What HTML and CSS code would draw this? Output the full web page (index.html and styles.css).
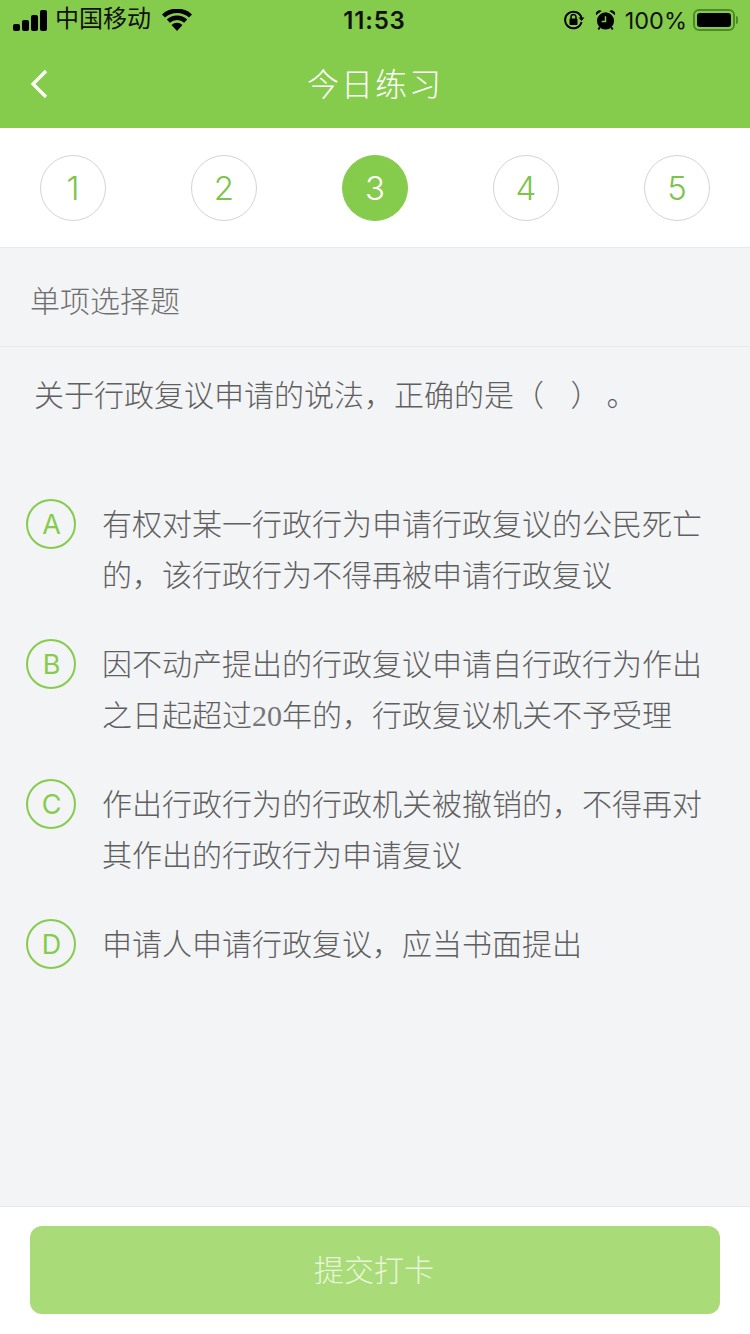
FILE: index.html
```html
<!DOCTYPE html>
<html lang="zh-CN">
<head>
<meta charset="utf-8">
<title>今日练习</title>
<link rel="stylesheet" href="styles.css">
</head>
<body>
<div class="page">
  <header class="top">
    <div class="status">
      <div class="status-side">
        <svg class="signal" width="34" height="21" viewBox="0 0 34 21"><rect x="0" y="14" width="7" height="7" rx="2"/><rect x="9" y="10" width="7" height="11" rx="2"/><rect x="18" y="5" width="7" height="16" rx="2"/><rect x="27" y="0" width="7" height="21" rx="2"/></svg>
        <span class="carrier">中国移动</span>
        <svg class="wifi" width="30" height="22" viewBox="0 0 30 22"><path d="M15 22l-5.500-6a8 8 0 0 1 11 0z"/><path d="M7.800 13.800l-3-3.200a15 15 0 0 1 20.400 0l-3 3.200a10.600 10.600 0 0 0-14.400 0z"/><path d="M3 8.600L0 5.500a22 22 0 0 1 30 0l-3 3.100a17.800 17.800 0 0 0-24 0z"/></svg>
      </div>
      <span class="time">11:53</span>
      <div class="status-side status-right">
        <svg class="lock" width="22" height="22" viewBox="0 0 22 22"><path d="M18.500 13a8.300 8.300 0 1 1 0-4" fill="none" stroke="#000" stroke-width="2"/><path d="M15.500 8.500h6l-3 3.500z"/><rect x="6.500" y="9.500" width="8" height="6.500" rx="1"/><path d="M8 10V8a2.500 2.500 0 0 1 5 0v2" fill="none" stroke="#000" stroke-width="1.500"/></svg>
        <svg class="alarm" width="21" height="22" viewBox="0 0 22 23"><circle cx="11" cy="12.500" r="9"/><path d="M1 6.500a4 4 0 0 1 6-4.500zM21 6.500a4 4 0 0 0-6-4.500z"/><path d="M5 19l-1.500 2.500M17 19l1.500 2.500" stroke="#000" stroke-width="2"/><path d="M11 7.500v5.500H7" fill="none" stroke="#86cc4c" stroke-width="1.500"/></svg>
        <span class="percent">100%</span>
        <div class="battery"><div class="battery-level"></div></div>
        <div class="battery-cap"></div>
      </div>
    </div>
    <nav class="nav">
      <svg class="back" width="18" height="30" viewBox="0 0 18 30"><path d="M16 2L3 15l13 13" fill="none" stroke="#fff" stroke-width="3.200"/></svg>
      <h1 class="title">今日练习</h1>
    </nav>
  </header>

  <section class="steps">
    <div class="step">1</div>
    <div class="step">2</div>
    <div class="step step-on">3</div>
    <div class="step">4</div>
    <div class="step">5</div>
  </section>

  <main class="main">
    <div class="kind">单项选择题</div>
    <p class="question">关于行政复议申请的说法，正确的是（&nbsp;&nbsp;&nbsp;&nbsp;）&thinsp;。</p>
    <div class="options">
      <div class="option"><div class="badge">A</div><p class="option-text">有权对某一行政行为申请行政复议的公民死亡的，该行政行为不得再被申请行政复议</p></div>
      <div class="option"><div class="badge">B</div><p class="option-text">因不动产提出的行政复议申请自行政行为作出<br>之日起超过<span class="num">20</span>年的，行政复议机关不予受理</p></div>
      <div class="option"><div class="badge">C</div><p class="option-text">作出行政行为的行政机关被撤销的，不得再对其作出的行政行为申请复议</p></div>
      <div class="option"><div class="badge">D</div><p class="option-text">申请人申请行政复议，应当书面提出</p></div>
    </div>
  </main>

  <footer class="footer">
    <button class="submit" type="button">提交打卡</button>
  </footer>
</div>
</body>
</html>
```
FILE: styles.css
```css
* { box-sizing: border-box; margin: 0; padding: 0; }
html, body { width: 750px; height: 1334px; overflow: hidden; }
body {
  font-family: "Liberation Sans", "Noto Sans CJK SC", sans-serif;
  background: #f3f4f6;
  color: #666;
}
.page { display: flex; flex-direction: column; height: 1334px; }

.top { background: #86cc4c; height: 128px; }
.status {
  height: 40px;
  padding: 0 12px 0 13px;
  display: flex;
  align-items: center;
  justify-content: space-between;
  color: #000;
}
.status-side { display: flex; align-items: center; width: 260px; }
.status-right { justify-content: flex-end; }
.status svg { fill: #000; display: block; }
.carrier { font-size: 24px; margin-left: 8px; color: #111; line-height: 40px; margin-top: -2px; }
.wifi { margin-left: 11px; }
.time { font-family: Inter, sans-serif; font-size: 24px; font-weight: 600; letter-spacing: 0.8px; color: #111; margin-left: -2px; }
.lock { margin-right: 10px; }
.alarm { margin-right: 9px; }
.percent { font-family: Inter, sans-serif; font-size: 23.500px; color: #111; margin-right: 6px; }
.battery {
  width: 42px;
  height: 22px;
  border: 2px solid #4f8a2a;
  border-radius: 6px;
  padding: 2px;
}
.battery-level { height: 100%; background: #000; border-radius: 3px; }
.battery-cap { width: 2px; height: 8px; background: #4f8a2a; margin-left: 1px; border-radius: 0 2px 2px 0; }

.nav {
  height: 88px;
  display: flex;
  align-items: center;
  justify-content: center;
  position: relative;
}
.back { position: absolute; left: 30px; top: 29px; }
.title {
  font-family: "Noto Sans CJK SC", sans-serif;
  font-size: 32px;
  font-weight: 300;
  letter-spacing: 2px;
  color: #fff;
  margin-top: -5px;
}

.steps {
  background: #fff;
  height: 120px;
  padding: 27px 40px 0;
  border-bottom: 1px solid #e8e9eb;
  display: flex;
  justify-content: space-between;
  align-items: flex-start;
}
.step {
  width: 66px;
  height: 66px;
  border-radius: 50%;
  border: 1px solid #d4d4d4;
  display: flex;
  align-items: center;
  justify-content: center;
  font-family: Inter, sans-serif;
  font-size: 33px;
  font-weight: 300;
  color: #7cc44a;
  background: #fff;
}
.step-on { background: #86cc4c; border-color: #86cc4c; color: #fff; }

.main {
  flex: 1;
  display: flex;
  flex-direction: column;
  font-family: "Noto Sans CJK SC", sans-serif;
  font-weight: 300;
}
.kind {
  height: 99px;
  padding-left: 30px;
  line-height: 102px;
  font-size: 30px;
  font-weight: 300;
  color: #6f6f6f;
  border-bottom: 1px solid #e8e9eb;
}
.question {
  padding: 21px 30px 0 34px;
  font-size: 30px;
  line-height: 50px;
  color: #5f5f5f;
}
.options {
  display: flex;
  flex-direction: column;
  gap: 40px;
  padding: 81px 40px 0 26px;
}
.option { display: flex; align-items: flex-start; }
.badge {
  flex: none;
  width: 50px;
  height: 50px;
  border-radius: 50%;
  border: 2px solid #86cc4c;
  display: flex;
  align-items: center;
  justify-content: center;
  font-family: Inter, sans-serif;
  font-size: 27px;
  font-weight: 400;
  color: #86cc4c;
  margin-right: 26px;
  padding-left: 1px;
}
.option-text { font-size: 30px; line-height: 51px; color: #5f5f5f; margin-top: -2px; }
.num { font-family: "Liberation Serif", serif; font-weight: 400; line-height: 1; color: #777; }

.footer {
  background: #fff;
  height: 128px;
  padding: 19px 30px;
  border-top: 1px solid #e8e9eb;
}
.submit {
  display: block;
  width: 100%;
  height: 88px;
  border: 0;
  border-radius: 12px;
  background: #a9db79;
  color: #e8f6da;
  font-family: "Noto Sans CJK SC", sans-serif;
  font-size: 30px;
  font-weight: 300;
  padding: 0 2px 4px 0;
}
```
